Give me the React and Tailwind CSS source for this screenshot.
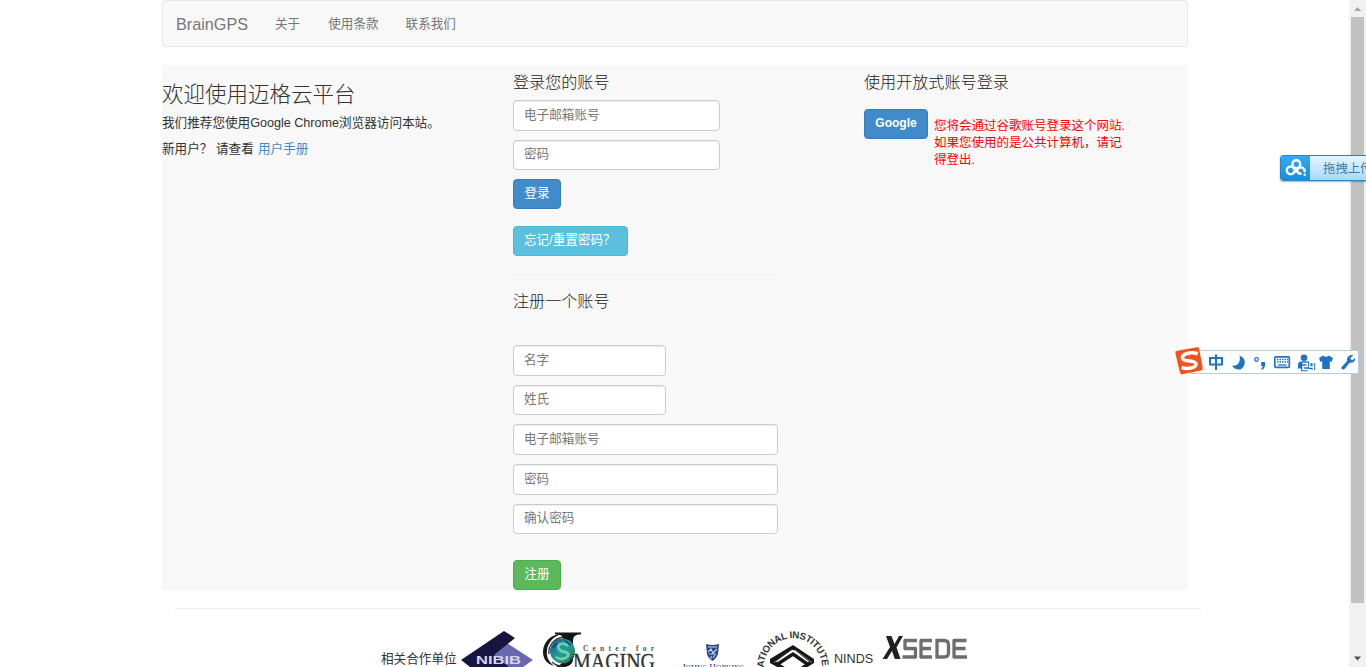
import React from 'react';

const inputBase =
  'block rounded-[4px] border border-[#ccc] bg-white px-[10px] pb-[2px] text-[12.6px] leading-[18px] text-[#333] shadow-[inset_0_1px_1px_rgba(0,0,0,0.075)] outline-none placeholder:text-[#777] placeholder:opacity-100';
const buttonBase =
  'block h-[30px] shrink-0 whitespace-nowrap rounded-[4px] border px-[10px] pb-[2px] leading-[18px] text-white';

function Field({ size, label, type = 'text' }) {
  return <input type={type} placeholder={label} aria-label={label} className={`${inputBase} ${size}`} />;
}

function Navbar() {
  return (
    <nav className="flex h-[47px] items-center rounded-[4px] border border-[#e7e7e7] bg-[#f8f8f8] pl-[13px] text-[#777]">
      <a className="w-[99px] text-[16.2px] leading-[20px]">BrainGPS</a>
      <a className="mr-[28px] text-[12.6px] leading-[20px]">关于</a>
      <a className="mr-[27px] text-[12.6px] leading-[20px]">使用条款</a>
      <a className="text-[12.6px] leading-[20px]">联系我们</a>
    </nav>
  );
}

function Welcome() {
  return (
    <section className="w-[351px] whitespace-nowrap pt-[17px]">
      <h1 className="text-[21.5px] font-light leading-[26px]">欢迎使用迈格云平台</h1>
      <p className="mt-[6px] text-[12.6px] leading-[18px]">我们推荐您使用Google Chrome浏览器访问本站。</p>
      <p className="mt-[8px] flex text-[12.6px] leading-[18px]">
        <span className="w-[54px]">新用户？</span>
        <span className="w-[42px]">请查看</span>
        <a className="text-[#428bca]">用户手册</a>
      </p>
    </section>
  );
}

function Accounts() {
  return (
    <section className="w-[351px] pt-[7px]">
      <h2 className="text-[16.1px] font-light leading-[20px] text-[#222]">登录您的账号</h2>
      <form className="mt-[8px] flex flex-col items-start gap-[9px]">
        <Field size="h-[31px] w-[207px]" label="电子邮箱账号" />
        <Field size="h-[30px] w-[207px]" label="密码" type="password" />
        <button type="button" className={`${buttonBase} w-[48px] border-[#357ebd] bg-[#428bca] text-[12.6px]`}>登录</button>
      </form>
      <button type="button" className={`${buttonBase} mt-[17px] w-[115px] border-[#46b8da] bg-[#5bc0de] text-left text-[12.6px]`}>
        忘记/重置密码？
      </button>
      <hr className="mt-[18px] w-[265px] border-[#eee]" />
      <h2 className="mt-[16px] text-[16.1px] font-light leading-[20px] text-[#222]">注册一个账号</h2>
      <form className="mt-[34px] flex flex-col items-start gap-[9px]">
        <Field size="h-[31px] w-[153px]" label="名字" />
        <Field size="h-[30px] w-[153px]" label="姓氏" />
        <Field size="h-[31px] w-[265px]" label="电子邮箱账号" />
        <Field size="h-[31px] w-[265px]" label="密码" type="password" />
        <Field size="h-[30px] w-[265px]" label="确认密码" type="password" />
        <button type="button" className={`${buttonBase} mt-[17px] w-[48px] border-[#4cae4c] bg-[#5cb85c] text-[12.6px]`}>注册</button>
      </form>
    </section>
  );
}

function OpenLogin() {
  return (
    <section className="pt-[7px]">
      <h2 className="text-[16.1px] font-light leading-[20px] text-[#222]">使用开放式账号登录</h2>
      <div className="mt-[17px] flex items-start gap-[6px]">
        <button type="button" className={`${buttonBase} w-[64px] border-[#357ebd] bg-[#428bca] text-[12px] font-bold`}>Google</button>
        <p className="mt-[9px] whitespace-nowrap text-[12.5px] leading-[17px] text-[#f00]">
          您将会通过谷歌账号登录这个网站.<br />
          如果您使用的是公共计算机，请记<br />
          得登出.
        </p>
      </div>
    </section>
  );
}

function NibibLogo() {
  return (
    <svg width="72" height="47" viewBox="0 0 72 47" className="shrink-0 overflow-hidden">
      <path d="M22 43 46 23 72 40 62 47H22Z" fill="#6869b0" />
      <path d="M0 40 43 11 54 18 33 35 48 47H9Z" fill="#17153f" />
      <text x="15" y="43.5" fontSize="11" fontWeight="bold" fill="#d5d5f0" textLength="45" lengthAdjust="spacingAndGlyphs">NIBIB</text>
    </svg>
  );
}

function ImagingLogo() {
  return (
    <svg width="114" height="47" viewBox="0 0 114 47" className="shrink-0 overflow-hidden">
      <defs>
        <linearGradient id="globe" x1="0" y1="0" x2="1" y2="1">
          <stop offset="0" stopColor="#164f86" />
          <stop offset=".5" stopColor="#269c99" />
          <stop offset="1" stopColor="#2c7545" />
        </linearGradient>
      </defs>
      <path d="M13 12.5H39V14.5C34 14 31 16 31 21V39C31 43 28 46 23 47H14C21 44 21 41 21 36V20C21 15 18 14 13 14.5Z" fill="#151515" />
      <path d="M20 14C9 14 1 22 1 32C1 39 5 44 12 46C6 41 4 36 5 30C6 22 12 16 20 14Z" fill="#181818" />
      <path d="M21 17C12 19 6 25 7 34M10 42C13 45 17 46 20 46" fill="none" stroke="#333" strokeWidth="1.3" />
      <circle cx="20.5" cy="31" r="12.5" fill="url(#globe)" />
      <path d="M26 26C21 21 14 25 17 29C19 33 28 31 26 36C24 39 18 40 14 37" fill="none" stroke="#6fd0b0" strokeWidth="2.8" />
      <path d="M11 28 15 23M28 40 32 36M23 21 29 25" stroke="#123f7c" strokeWidth="1.5" />
      <text x="41" y="30.5" fontSize="7.5" fontWeight="bold" fill="#555" fontFamily="Liberation Serif, serif" textLength="71">Center for</text>
      <text x="31" y="48.5" fontSize="23" fill="#333" stroke="#333" strokeWidth=".3" fontFamily="Liberation Serif, serif" textLength="82" lengthAdjust="spacingAndGlyphs">MAGING</text>
    </svg>
  );
}

function HopkinsLogo() {
  return (
    <svg width="62" height="47" viewBox="0 0 62 47" className="shrink-0 overflow-hidden">
      <path d="M24 24Q30 26 37 24L36 34Q34 39 30.5 41Q26 38 25 34Z" fill="#23458b" />
      <path d="M26 27H35M26 32 29 29 31 33 35 29M27 34H34M29 36V39M33 35 31 38" stroke="#cbd6e9" strokeWidth="1.1" fill="none" />
      <text x="0" y="50.5" fontSize="10" fill="#24438a" fontFamily="Liberation Serif, serif" textLength="62" lengthAdjust="spacingAndGlyphs">
        J<tspan fontSize="8.5">OHNS</tspan> H<tspan fontSize="8.5">OPKINS</tspan>
      </text>
    </svg>
  );
}

function NindsLogo() {
  return (
    <svg width="72" height="47" viewBox="0 0 72 47" className="shrink-0 overflow-hidden">
      <defs><path id="seal-ring" d="M10.5 61A29 29 0 1 1 61.5 61" /></defs>
      <text fontSize="9.8" fontWeight="bold" fill="#353535" textAnchor="middle" letterSpacing="-0.35">
        <textPath href="#seal-ring" startOffset="49%">NATIONAL INSTITUTES</textPath>
      </text>
      <path d="M36 25 57 39V43L36 56 13 43V39Z" fill="#171717" />
      <path d="M36 29 53 41 36 52 18 41Z" fill="#fff" />
      <path d="M16 42 32 30Q36 27 40 30L55 42" fill="none" stroke="#171717" strokeWidth="3" />
      <path d="M20 44.5 36 34 51 44.5" fill="none" stroke="#171717" strokeWidth="3.5" />
      <path d="M17 42.5 35 30M55 42.5 38 30" stroke="#aaa" strokeWidth=".7" />
    </svg>
  );
}

function XsedeLogo() {
  return (
    <svg width="86" height="47" viewBox="0 0 86 47" className="shrink-0 overflow-hidden">
      <path d="M4 16H9.5L12.5 24 17 16H21L14.5 27.5 18.5 39H12.8L10 31 5 39H0.5L8 27Z" fill="#242021" />
      <path d="M35 20.5H23V28.5H33.5V37H20.5M50 20.5H39V37H50M39 28.5H49M84.5 20.5H72V37H85M72 28.5H83.5" fill="none" stroke="#6d6e70" strokeWidth="3.3" strokeLinejoin="round" />
      <path d="M55 20.5H62Q66.5 20.5 66.5 25V33Q66.5 37 62 37H55Z" fill="none" stroke="#6d6e70" strokeWidth="3.3" />
    </svg>
  );
}

function Partners() {
  return (
    <footer className="flex h-[47px] shrink-0 items-start overflow-hidden pl-[381px] text-[12.6px] leading-[18px]">
      <span className="mt-[30px] w-[80px] shrink-0 whitespace-nowrap">相关合作单位</span>
      <NibibLogo />
      <div className="ml-[9px] flex"><ImagingLogo /></div>
      <div className="ml-[26px] flex"><HopkinsLogo /></div>
      <div className="ml-[13px] flex"><NindsLogo /></div>
      <span className="ml-[5px] mt-[30px] w-[48px] shrink-0">NINDS</span>
      <XsedeLogo />
    </footer>
  );
}

function Scrollbar() {
  return (
    <div className="flex w-[17px] shrink-0 flex-col items-center bg-[#f1f1f1]">
      <svg width="17" height="17" viewBox="0 0 17 17"><path d="M5 11 8.5 7 12 11Z" fill="#a3a3a3" /></svg>
      <div className="h-[586px] w-[13px] bg-[#c1c1c1]" />
      <svg width="17" height="17" viewBox="0 0 17 17" className="mt-auto"><path d="M5 6.5H12L8.5 10.5Z" fill="#505050" /></svg>
    </div>
  );
}

function UploadDock() {
  return (
    <div className="absolute left-[1280px] top-[155px] flex h-[26px] w-[90px] overflow-hidden rounded-[3px] border border-[#2587c8] bg-linear-to-b from-[#e5f5ff] to-[#a4dafc] shadow-[0_1px_2px_rgba(0,0,0,0.3)]">
      <div className="flex w-[29px] shrink-0 items-center justify-center bg-linear-to-b from-[#35a9f2] to-[#168de0]">
        <svg width="22" height="20" viewBox="0 0 22 20" fill="none" stroke="#fff" strokeWidth="2.4" strokeLinecap="round">
          <circle cx="11.3" cy="6.2" r="3.9" />
          <circle cx="5.6" cy="12.4" r="3.8" />
          <path d="M8.3 15 13.5 10.3Q16 8.6 18 10Q19.8 11.2 19.7 13.3M12.2 13.2Q13 15.8 15.6 15.8" />
          <path d="M19.7 16.6V16.8" />
        </svg>
      </div>
      <span className="ml-[13px] shrink-0 whitespace-nowrap pt-[4px] text-[12.4px] leading-[18px] text-[#4878a0]">拖拽上传</span>
    </div>
  );
}

function InputMethodBar() {
  return (
    <div className="absolute left-[1174px] top-[345px] h-[32px] w-[186px]">
      <svg width="186" height="32" viewBox="0 0 186 32">
        <rect x="16.5" y="5.5" width="168" height="23" fill="#fff" stroke="#b4cce0" />
        <path d="M3.2 5.8 23 2.2Q24.7 2 25 3.6L28.8 23Q29 25 27.3 25.4L8.2 29.2Q6.5 29.5 6 27.8L1.4 8.2Q1.1 6.2 3.2 5.8Z" fill="#f2531e" />
        <path d="M23.7 8.7C17 6.7 7.5 8.5 8.5 13.3C9.5 17.5 21.5 14.5 22 18.8C22.3 23 13 24.6 7.6 22.3" fill="none" stroke="#fff" strokeWidth="3.5" />
        <path d="M36 13H48V19.5H36ZM42 9.5V25" fill="none" stroke="#1f73c5" strokeWidth="2" />
        <path d="M65.5 10.5C72 13 72.5 20 67 24.3C63 25 59.5 23.5 58 20.7C63.5 21.5 67 17.5 65.5 10.5Z" fill="#1f73c5" />
        <circle cx="82.5" cy="14.5" r="1.8" fill="none" stroke="#1f73c5" strokeWidth="1.3" />
        <path d="M87.2 17H91V20Q91 23.5 87.5 25V23.4L89 21.3H87.2Z" fill="#1f73c5" />
        <rect x="100.8" y="11.8" width="14.5" height="10.5" rx="1" fill="#fff" stroke="#1f73c5" strokeWidth="1.7" />
        <path d="M103 14.5H114M103 17H114" stroke="#1f73c5" strokeWidth="1.4" strokeDasharray="1.5 1" />
        <path d="M104 20H112.5" stroke="#1f73c5" strokeWidth="1.3" />
        <circle cx="130" cy="12.8" r="3.3" fill="#1f73c5" />
        <path d="M124 23.5V20Q124 16.8 127 16.5H132Q135 17 135 20V23.5Z" fill="#1f73c5" />
        <path d="M128.3 18.5H133.2V21.4H129V24.4H133.7M135.7 18.2V22H140.5M139.3 18.2V25" fill="none" stroke="#1f73c5" strokeWidth="3.8" />
        <path d="M128.3 18.5H133.2V21.4H129V24.4H133.7M135.7 18.2V22H140.5M139.3 18.2V25" fill="none" stroke="#fff" strokeWidth="1.5" />
        <path d="M149 10.5Q152 13 155 10.5L159 13 157.5 17 155.8 16.3V24H148.2V16.3L146.5 17 145 13Z" fill="#1f73c5" />
        <path d="M172.8 10.1 169.8 13.3 171.5 15.6 174.6 13C175 16.5 172.5 18.2 169.3 17.7L163.8 24.3Q161.8 25 161 23.5Q160.5 22.2 161.8 21.3L166.7 16.1C165.5 12 169.2 9.4 172.8 10.1Z" transform="translate(6.5 0)" fill="#1f73c5" />
      </svg>
    </div>
  );
}

export default function App() {
  return (
    <div className="relative flex h-[667px] w-[1366px] overflow-hidden bg-white font-['Liberation_Sans','Noto_Sans_CJK_SC',sans-serif] text-[#333]">
      <div className="flex w-[1349px] shrink-0 flex-col">
        <div className="ml-[162px] w-[1026px]">
          <Navbar />
          <main className="mt-[18px] flex h-[525px] bg-[#f8f8f8]">
            <Welcome />
            <Accounts />
            <OpenLogin />
          </main>
        </div>
        <hr className="ml-[175px] mt-[18px] w-[1026px] border-[#eee]" />
        <div className="mt-[11px]"><Partners /></div>
      </div>
      <Scrollbar />
      <UploadDock />
      <InputMethodBar />
    </div>
  );
}
